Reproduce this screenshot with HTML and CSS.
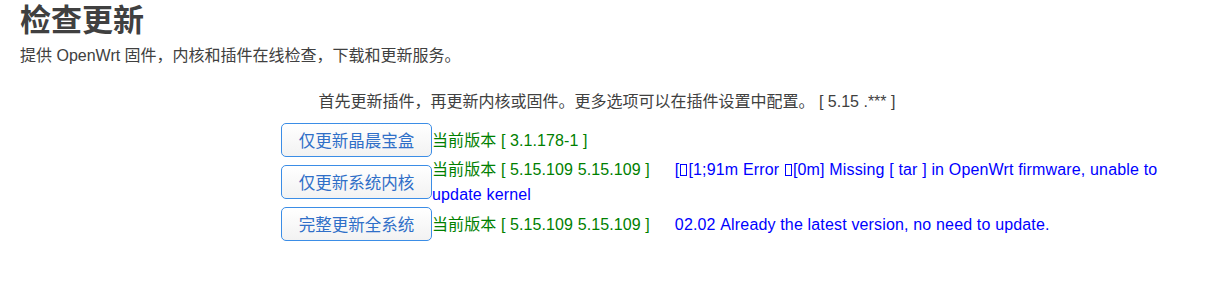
FILE: index.html
```html
<!DOCTYPE html>
<html lang="zh-CN">
<head>
<meta charset="utf-8">
<title>检查更新</title>
<link rel="stylesheet" href="styles.css">
</head>
<body>
<div class="page">
  <h2 class="title">检查更新</h2>
  <div class="desc">提供 OpenWrt 固件，内核和插件在线检查，下载和更新服务。</div>
  <div class="note">首先更新插件，再更新内核或固件。更多选项可以在插件设置中配置。 [ 5.15 .*** ]</div>
  <div class="rows">
    <div class="row">
      <button class="btn">仅更新晶晨宝盒</button>
      <div class="info"><span class="ver">当前版本 [ 3.1.178-1 ]</span></div>
    </div>
    <div class="row">
      <button class="btn">仅更新系统内核</button>
      <div class="info"><span class="ver">当前版本 [ 5.15.109 5.15.109 ]</span><span class="msg">[<span class="ctl"></span>[1;91m Error <span class="ctl"></span>[0m] Missing [ tar ] in OpenWrt firmware, unable to update kernel</span></div>
    </div>
    <div class="row">
      <button class="btn">完整更新全系统</button>
      <div class="info"><span class="ver">当前版本 [ 5.15.109 5.15.109 ]</span><span class="msg">02.02 Already the latest version, no need to update.</span></div>
    </div>
  </div>
</div>
</body>
</html>
```

FILE: styles.css
```css
html, body {
  margin: 0;
  padding: 0;
  background: #ffffff;
}
body {
  font-family: "Liberation Sans", Arial, "Noto Sans CJK SC", sans-serif;
  font-size: 16px;
  color: #404040;
}
.page {
  padding: 0 20px;
}
.title {
  margin: 0;
  padding-top: 3px;
  font-size: 31px;
  line-height: 36px;
  font-weight: bold;
  color: #404040;
}
.desc {
  font-size: 16px;
  line-height: 24px;
  margin-top: 5px;
}
.note {
  text-align: center;
  margin-top: 22px;
  line-height: 24px;
  padding-right: 16px;
}
.rows {
  margin-top: 9px;
  padding-left: 261px;
  padding-right: 12px;
  display: flex;
  flex-direction: column;
}
.row {
  display: flex;
  align-items: center;
  min-height: 34px;
}
.btn {
  flex: 0 0 auto;
  width: 151px;
  height: 34px;
  margin: 0;
  padding: 0;
  border: 1px solid #3b8de6;
  border-radius: 5px;
  background: linear-gradient(#ffffff, #f2f2f2);
  color: #2f6fc8;
  font-family: "Liberation Sans", Arial, "Noto Sans CJK SC", sans-serif;
  font-size: 16.5px;
  cursor: pointer;
}
.info {
  flex: 1 1 auto;
  line-height: 25px;
}
.ver {
  color: #008000;
  letter-spacing: 0.1px;
}
.msg {
  color: #0000ff;
  padding-left: 25px;
  letter-spacing: 0.16px;
}
.ctl {
  display: inline-block;
  width: 7px;
  height: 12px;
  border: 1px solid #0000ff;
  box-sizing: border-box;
  margin: 0 1px;
  vertical-align: -1px;
}
```
